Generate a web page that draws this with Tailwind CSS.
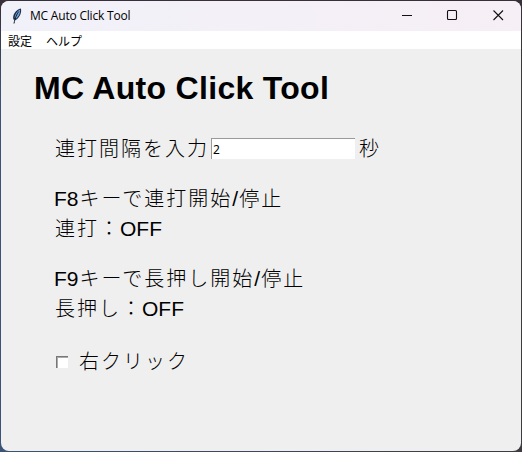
<!DOCTYPE html>
<html lang="ja">
<head>
<meta charset="utf-8">
<title>MC Auto Click Tool</title>
<script src="https://cdn.jsdelivr.net/npm/@tailwindcss/browser@4"></script>
</head>
<body class="w-[522px] h-[452px] overflow-hidden bg-linear-to-r from-[#3c5378] to-[#3e3a40] text-black">
<div class="h-[452px] pt-px pl-px pr-px pb-px bg-linear-to-b from-[#37303a] from-2% to-transparent to-20%">
<main class="h-[450px] rounded-lg overflow-hidden bg-[#efefef] flex flex-col">
  <header class="h-[30px] shrink-0 bg-linear-to-r from-[#f1f1f9] to-[#f6eff5] flex items-center">
    <svg class="ml-[10px] -mt-px" width="12" height="16" viewBox="0 0 12 16">
      <path d="M2.4 11.6C1 7 5 1.4 9.8 .5C11 3.5 9 9.6 4.8 12Z" fill="#1c2c48"/>
      <path d="M3.6 10C3.8 6.4 6 3 9 1.6C9.6 4.4 7.8 8.8 5 10.8Z" fill="#6fa3dc"/>
      <path d="M7.8 3.5C5.6 6.5 4.2 9.5 3 15.5" fill="none" stroke="#101828" stroke-width="1"/>
    </svg>
    <h1 class="ml-[7px] font-['Open_Sans','Noto_Sans',sans-serif] text-[12px] tracking-[-0.2px] leading-4 whitespace-nowrap">MC Auto Click Tool</h1>
    <div class="ml-auto flex items-center">
      <svg width="136" height="30" viewBox="0 0 136 30" fill="none" stroke="#111" stroke-width="1.1">
        <path d="M17 14.5H27"/>
        <rect x="62.5" y="9.5" width="9" height="9" rx="1"/>
        <path d="M108.5 9.5L118 19M118 9.5L108.5 19"/>
      </svg>
    </div>
  </header>
  <nav class="h-[18px] shrink-0 bg-white flex gap-[14px] pl-[7px] font-['Noto_Sans_CJK_JP',sans-serif] text-[12px] leading-[20px]">
    <span>設定</span><span>ヘルプ</span>
  </nav>
  <section class="pl-[53px] pt-[19px] font-['Liberation_Sans',sans-serif] text-[21px] leading-[30px] whitespace-nowrap">
    <h2 class="-ml-[20px] h-[40px] text-[32px] leading-[40px] font-bold tracking-[0.3px]">MC Auto Click Tool</h2>
    <div class="mt-[25px] h-[30px] flex items-center">
      <span class="ml-px font-['Noto_Sans_CJK_JP',sans-serif] font-light text-[20px] tracking-[2px] w-[156px]">連打間隔を入力</span>
      <div class="w-[144px] h-[21px] mt-px bg-white border-t border-l border-[#999] pl-px font-['Noto_Sans',sans-serif] text-[12px] leading-[21px]">2</div>
      <span class="ml-[4px] font-['Noto_Sans_CJK_JP',sans-serif] font-light text-[20px]">秒</span>
    </div>
    <div class="mt-[20px]">
      <p class="h-[30px]">F8<span class="ml-px font-['Noto_Sans_CJK_JP',sans-serif] font-light text-[20px] tracking-[2px]">キーで連打開始</span>/<span class="ml-px font-['Noto_Sans_CJK_JP',sans-serif] font-light text-[20px] tracking-[2px]">停止</span></p>
      <p class="h-[30px]"><span class="ml-px font-['Noto_Sans_CJK_JP',sans-serif] font-light text-[20px] tracking-[2px]">連打：</span><span class="-ml-px">OFF</span></p>
    </div>
    <div class="mt-[20px]">
      <p class="h-[30px]">F9<span class="ml-px font-['Noto_Sans_CJK_JP',sans-serif] font-light text-[20px] tracking-[2px]">キーで長押し開始</span>/<span class="ml-px font-['Noto_Sans_CJK_JP',sans-serif] font-light text-[20px] tracking-[2px]">停止</span></p>
      <p class="h-[30px]"><span class="ml-px font-['Noto_Sans_CJK_JP',sans-serif] font-light text-[20px] tracking-[2px]">長押し：</span><span class="-ml-px">OFF</span></p>
    </div>
    <div class="mt-[23px] h-[30px] flex items-center">
      <div class="ml-[2px] mt-px w-[12px] h-[12px] bg-white border-t border-l border-[#777] shadow-[inset_1px_1px_0_#aaa]"></div>
      <span class="ml-[11px] font-['Noto_Sans_CJK_JP',sans-serif] font-light text-[20px] tracking-[2px]">右クリック</span>
    </div>
  </section>
</main>
</div>
</body>
</html>
